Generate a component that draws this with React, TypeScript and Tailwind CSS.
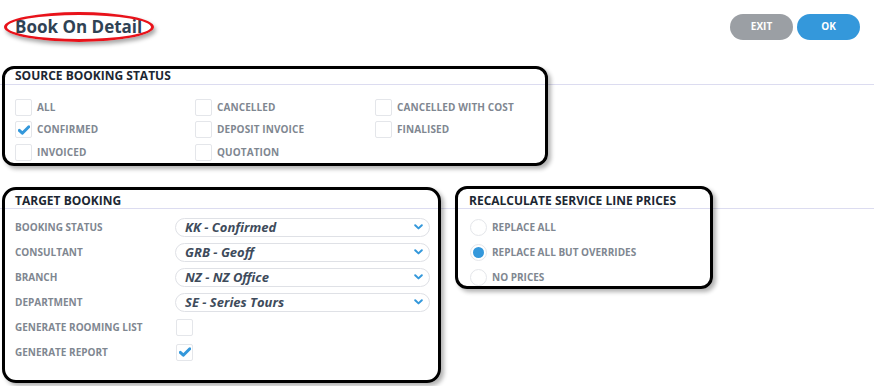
import React from "react";

const font = { fontFamily: '"Open Sans", "Noto Sans", sans-serif' };

function Check() {
  return (
    <svg width="12" height="10" viewBox="0 0 12 10" className="block">
      <path d="M1.3 5.4 L4.3 8.2 L10.8 1.8" fill="none" stroke="#3498db" strokeWidth="3" strokeLinecap="round" strokeLinejoin="round" />
    </svg>
  );
}

function Box({ checked }: { checked?: boolean }) {
  return (
    <div className="w-[17px] h-[17px] border border-[#e4e6ea] rounded-[2px] bg-white flex items-center justify-center shrink-0">
      {checked && <Check />}
    </div>
  );
}

function CheckItem({ label, checked }: { label: string; checked?: boolean }) {
  return (
    <div className="flex items-center gap-[5px] w-[180px] h-[22.5px]">
      <Box checked={checked} />
      <span className="text-[10px] font-bold text-[#7f8791] tracking-[0.1px]">{label}</span>
    </div>
  );
}

function Select({ value }: { value: string }) {
  return (
    <div className="w-[255px] h-[19px] border border-[#dfe1e6] rounded-full flex items-center justify-between pl-[9px] pr-[6px] bg-white">
      <span className="text-[13px] font-bold italic text-[#3e4b5b] leading-none">{value}</span>
      <svg width="9" height="6" viewBox="0 0 9 6">
        <path d="M1.2 1.2 L4.5 4.4 L7.8 1.2" fill="none" stroke="#3498db" strokeWidth="2" strokeLinecap="round" strokeLinejoin="round" />
      </svg>
    </div>
  );
}

function Row({ label, children }: { label: string; children: React.ReactNode }) {
  return (
    <div className="flex items-center h-[25px]">
      <span className="w-[160px] text-[10px] font-bold text-[#7f8791]">{label}</span>
      {children}
    </div>
  );
}

function Radio({ label, checked }: { label: string; checked?: boolean }) {
  return (
    <div className="flex items-center gap-[5px] h-[25px]">
      <div className="w-[17px] h-[17px] rounded-full border border-[#e4e6ea] bg-white flex items-center justify-center">
        {checked && <div className="w-[11px] h-[11px] rounded-full bg-[#3498db]" />}
      </div>
      <span className="text-[10px] font-bold text-[#7f8791]">{label}</span>
    </div>
  );
}

export default function App() {
  return (
    <div className="relative w-[874px] h-[386px] bg-white overflow-hidden" style={font}>
      {/* header */}
      <div className="flex items-center justify-between h-[54px] pl-[15px] pr-[14px]">
        <h1 className="text-[17px] font-bold text-[#2f4254] leading-none -mt-[1px]">Book On Detail</h1>
        <div className="flex gap-[4px] -mt-[1px]">
          <button className="w-[63px] h-[26px] rounded-full bg-[#9b9fa4] text-white text-[10px] font-bold">EXIT</button>
          <button className="w-[63px] h-[26px] rounded-full bg-[#3498db] text-white text-[10px] font-bold">OK</button>
        </div>
      </div>

      {/* Source booking status */}
      <div className="mt-[12px]">
        <div className="border-b border-[#dcdcf0] h-[19px] flex items-center pl-[15px] pt-[2px]">
          <span className="text-[12px] font-bold text-[#1c2733] uppercase">Source Booking Status</span>
        </div>
        <div className="pl-[15px] pt-[11px] grid grid-cols-[180px_180px_180px]">
          <CheckItem label="ALL" />
          <CheckItem label="CANCELLED" />
          <CheckItem label="CANCELLED WITH COST" />
          <CheckItem label="CONFIRMED" checked />
          <CheckItem label="DEPOSIT INVOICE" />
          <CheckItem label="FINALISED" />
          <CheckItem label="INVOICED" />
          <CheckItem label="QUOTATION" />
        </div>
      </div>

      {/* Bottom sections */}
      <div className="flex mt-[27px]">
        <div className="w-[455px]">
          <div className="border-b border-[#dcdcf0] h-[18px] flex items-center pl-[15px] pt-[3px]">
            <span className="text-[12px] font-bold text-[#1c2733]">TARGET BOOKING</span>
          </div>
          <div className="pl-[15px] pt-[6px]">
            <Row label="BOOKING STATUS"><Select value="KK - Confirmed" /></Row>
            <Row label="CONSULTANT"><Select value="GRB - Geoff" /></Row>
            <Row label="BRANCH"><Select value="NZ - NZ Office" /></Row>
            <Row label="DEPARTMENT"><Select value="SE - Series Tours" /></Row>
            <Row label="GENERATE ROOMING LIST"><div className="pl-[1px]"><Box /></div></Row>
            <Row label="GENERATE REPORT"><div className="pl-[1px]"><Box checked /></div></Row>
          </div>
        </div>
        <div className="flex-1">
          <div className="border-b border-[#dcdcf0] h-[18px] flex items-center pl-[14px] pt-[3px]">
            <span className="text-[12px] font-bold text-[#1c2733]">RECALCULATE SERVICE LINE PRICES</span>
          </div>
          <div className="pl-[15px] pt-[6px]">
            <Radio label="REPLACE ALL" />
            <Radio label="REPLACE ALL BUT OVERRIDES" checked />
            <Radio label="NO PRICES" />
          </div>
        </div>
      </div>

      {/* Annotations */}
      <div className="absolute left-[4px] top-[12px] w-[150px] h-[30px] rounded-[50%] border-[3px] border-[#e8121a] shadow-[2px_3px_4px_rgba(0,0,0,0.35)] pointer-events-none" />
      <div className="absolute left-[2px] top-[66px] w-[546px] h-[100px] rounded-[12px] border-[3px] border-black shadow-[3px_3px_4px_rgba(0,0,0,0.3)] pointer-events-none" />
      <div className="absolute left-[2px] top-[187px] w-[439px] h-[196px] rounded-[14px] border-[3px] border-black shadow-[3px_3px_4px_rgba(0,0,0,0.3)] pointer-events-none" />
      <div className="absolute left-[455px] top-[186px] w-[258px] h-[103px] rounded-[12px] border-[3px] border-black shadow-[3px_3px_4px_rgba(0,0,0,0.3)] pointer-events-none" />
    </div>
  );
}
